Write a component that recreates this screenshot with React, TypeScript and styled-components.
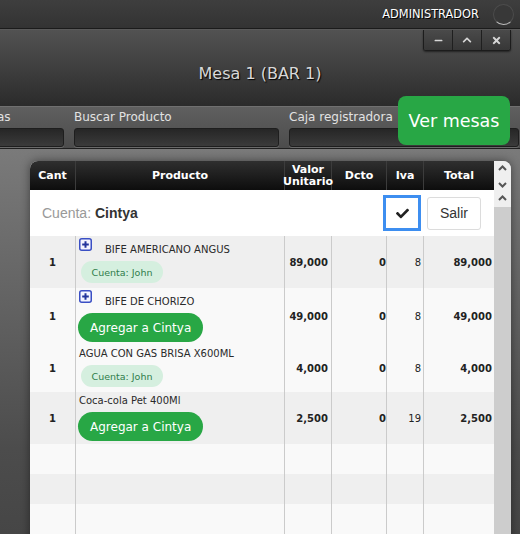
import React from 'react';
import styled, { createGlobalStyle } from 'styled-components';
import { FaCheck, FaMinus, FaChevronUp, FaTimes } from 'react-icons/fa';

const GlobalStyle = createGlobalStyle`
  html, body {
    margin: 0;
    padding: 0;
    background: #454545;
    overflow: hidden;
  }
  body {
    font-family: "DejaVu Sans", Verdana, sans-serif;
  }
`;

const COLS = '46px 209px 47px 55px 37px 70px';

const Page = styled.div`
  position: relative;
  width: 520px;
  height: 534px;
  overflow: hidden;
  display: flex;
  flex-direction: column;
`;

const TopBar = styled.header`
  height: 28px;
  flex: none;
  background: linear-gradient(#3e3e3e, #333);
  border-bottom: 1px solid #1b1b1b;
  display: flex;
  align-items: center;
  justify-content: flex-end;
  gap: 14px;
  padding-right: 6px;
`;

const UserName = styled.span`
  color: #fff;
  font-size: 11.4px;
  text-shadow: 1px 1px 0 #000;
`;

const Avatar = styled.span`
  width: 19px;
  height: 19px;
  border-radius: 50%;
  background: #383838;
  border: 1px solid #4c4c4c;
  border-bottom-color: #bdbdbd;
`;

const TitleBar = styled.div`
  height: 76px;
  flex: none;
  border-top: 1px solid #5a5a5a;
  background: linear-gradient(#525252, #2b2b2b);
  display: flex;
  flex-direction: column;
`;

const WindowButtons = styled.div`
  align-self: flex-end;
  margin-right: 9px;
  display: flex;
  border: 1px solid #1c1c1c;
  border-top: none;
  border-radius: 0 0 3px 3px;
  overflow: hidden;
  box-shadow: 0 1px 2px rgba(0, 0, 0, 0.5);
`;

const WinBtn = styled.span`
  width: 28px;
  height: 20px;
  display: flex;
  align-items: center;
  justify-content: center;
  color: #d6d6d6;
  background: linear-gradient(#4a4a4a, #373737);
  & + & {
    border-left: 1px solid #1f1f1f;
  }
`;

const Title = styled.h1`
  margin: 13px 0 0;
  text-align: center;
  font-size: 16px;
  font-weight: normal;
  line-height: 20px;
  color: #d8d8d8;
  text-shadow: 1px 1px 1px #000;
`;

const Toolbar = styled.div`
  height: 41px;
  flex: none;
  border-top: 1px solid #707070;
  border-bottom: 1px solid #202020;
  background: linear-gradient(#5f5f5f, #4c4c4c);
  overflow: hidden;
`;

const Fields = styled.div`
  display: flex;
  gap: 10px;
  margin-left: -27px;
  padding-top: 3px;
`;

const Field = styled.label<{ $w: number }>`
  width: ${(p) => p.$w}px;
  flex: none;
  display: flex;
  flex-direction: column;
  gap: 3px;
`;

const FieldLabel = styled.span`
  font-size: 12px;
  line-height: 15px;
  color: #e2e2e2;
  white-space: nowrap;
`;

const FieldInput = styled.span`
  height: 17px;
  border: 1px solid #1e1e1e;
  border-radius: 3px;
  background: linear-gradient(#262626, #3b3b3b);
  box-shadow: 0 1px 0 #6a6a6a;
`;

const VerMesas = styled.button`
  position: absolute;
  top: 96px;
  right: 10px;
  width: 112px;
  height: 49px;
  border: none;
  border-radius: 8px;
  background: #28a745;
  color: #fff;
  font-family: "DejaVu Sans", Verdana, sans-serif;
  font-size: 17.5px;
  padding: 0;
`;

const Content = styled.main`
  flex: 1;
  padding: 12px 0 0 30px;
  background: linear-gradient(#7a7a7a 0, #4c4c4c 300px, #444 100%);
`;

const Card = styled.section`
  width: 481px;
  height: 400px;
  display: flex;
  border-radius: 8px 8px 0 0;
  overflow: hidden;
  box-shadow: 0 0 10px rgba(0, 0, 0, 0.45);
`;

const TableArea = styled.div`
  width: 464px;
  flex: none;
  background: #f9f9f9;
`;

const HeadRow = styled.div`
  display: grid;
  grid-template-columns: ${COLS};
  height: 29px;
  background: linear-gradient(#2f2f2f, #0d0d0d);
`;

const HeadCell = styled.div`
  display: flex;
  align-items: center;
  justify-content: center;
  text-align: center;
  color: #fff;
  font-size: 11px;
  font-weight: bold;
  line-height: 12px;
  white-space: nowrap;
  &:not(:last-child) {
    border-right: 1px solid #3c3c3c;
  }
`;

const CuentaBar = styled.div`
  height: 46px;
  background: #fff;
  display: flex;
  align-items: center;
  gap: 6px;
  padding: 0 13px 0 12px;
  font-family: "Liberation Sans", Arial, sans-serif;
  font-size: 14px;
`;

const CuentaLabel = styled.span`
  flex: 1;
  color: #999;
  b {
    color: #333;
  }
`;

const CheckBtn = styled.button`
  width: 38px;
  height: 36px;
  display: flex;
  align-items: center;
  justify-content: center;
  background: #fff;
  border: 3px solid #3d8ef0;
  color: #222;
  padding: 0;
`;

const SalirBtn = styled.button`
  width: 54px;
  height: 33px;
  background: #fff;
  border: 1px solid #dcdcdc;
  border-radius: 3px;
  color: #333;
  font-family: "Liberation Sans", Arial, sans-serif;
  font-size: 14px;
  padding: 0;
`;

const Row = styled.div<{ $shade: boolean; $h?: number }>`
  display: grid;
  grid-template-columns: ${COLS};
  background: ${(p) => (p.$shade ? '#efefef' : '#f9f9f9')};
  min-height: ${(p) => p.$h ?? 0}px;
`;

const Cell = styled.div<{ $align?: string; $pr?: number; $bold?: boolean }>`
  display: flex;
  align-items: center;
  justify-content: ${(p) => p.$align ?? 'flex-end'};
  padding-right: ${(p) => p.$pr ?? 0}px;
  font-size: 10px;
  font-weight: ${(p) => (p.$bold ? 'bold' : 'normal')};
  color: #222;
  &:not(:last-child) {
    border-right: 1px solid #cbcbcb;
  }
`;

const ProductCell = styled.div`
  padding: 2px 3px 3px 2px;
  border-right: 1px solid #cbcbcb;
  display: flex;
  flex-direction: column;
  align-items: flex-start;
  gap: 5px;
`;

const NameLine = styled.div`
  display: flex;
  align-items: flex-start;
  margin-left: 1px;
`;

const Name = styled.span<{ $icon?: boolean }>`
  font-size: 10px;
  line-height: 12px;
  color: #2a2a2a;
  white-space: nowrap;
  margin: ${(p) => (p.$icon ? '6px 0 0 13px' : '1px 0 0 0')};
`;

const Badge = styled.span`
  height: 22px;
  display: inline-flex;
  align-items: center;
  padding: 0 10.5px;
  margin: 0 0 2px 3px;
  border-radius: 11px;
  background: #d5efdf;
  color: #2f7d4a;
  font-size: 9.5px;
`;

const AddBtn = styled.button`
  height: 29px;
  padding: 0 12px;
  border: none;
  border-radius: 15px;
  background: #28a745;
  color: #fff;
  font-family: "DejaVu Sans", Verdana, sans-serif;
  font-size: 12px;
`;

const Scrollbar = styled.div`
  width: 17px;
  flex: none;
  background: #cdcdcd;
`;

const ScrollTop = styled.div`
  height: 46px;
  background: #efefef;
  display: flex;
  flex-direction: column;
  align-items: center;
`;

const Chevron = styled.svg<{ $mt: number }>`
  display: block;
  margin-top: ${(p) => p.$mt}px;
`;

const PlusIcon = () => (
  <svg width="13" height="13" viewBox="0 0 13 13">
    <rect x="0.75" y="0.75" width="11.5" height="11.5" rx="2" fill="#f3f5ff" stroke="#3a4fc4" strokeWidth="1.5" />
    <path d="M6.5 3.2v6.6M3.2 6.5h6.6" stroke="#22359c" strokeWidth="2" />
  </svg>
);

type Item = {
  name: string;
  icon: boolean;
  owner?: string;
  price: string;
  iva: string;
  shade: boolean;
};

const items: Item[] = [
  { name: 'BIFE AMERICANO ANGUS', icon: true, owner: 'John', price: '89,000', iva: '8', shade: true },
  { name: 'BIFE DE CHORIZO', icon: true, price: '49,000', iva: '8', shade: false },
  { name: 'AGUA CON GAS BRISA X600ML', icon: false, owner: 'John', price: '4,000', iva: '8', shade: false },
  { name: 'Coca-cola Pet 400Ml', icon: false, price: '2,500', iva: '19', shade: true },
];

const emptyShades = [false, true, false, true];

export default function App() {
  return (
    <Page>
      <GlobalStyle />
      <TopBar>
        <UserName>ADMINISTRADOR</UserName>
        <Avatar />
      </TopBar>
      <TitleBar>
        <WindowButtons>
          <WinBtn><FaMinus size={9} /></WinBtn>
          <WinBtn><FaChevronUp size={10} /></WinBtn>
          <WinBtn><FaTimes size={11} /></WinBtn>
        </WindowButtons>
        <Title>Mesa 1 (BAR 1)</Title>
      </TitleBar>
      <Toolbar>
        <Fields>
          <Field $w={91}>
            <FieldLabel>Mesas</FieldLabel>
            <FieldInput />
          </Field>
          <Field $w={205}>
            <FieldLabel>Buscar Producto</FieldLabel>
            <FieldInput />
          </Field>
          <Field $w={230}>
            <FieldLabel>Caja registradora</FieldLabel>
            <FieldInput />
          </Field>
        </Fields>
      </Toolbar>
      <VerMesas>Ver mesas</VerMesas>
      <Content>
        <Card>
          <TableArea>
            <HeadRow>
              <HeadCell>Cant</HeadCell>
              <HeadCell>Producto</HeadCell>
              <HeadCell>Valor<br />Unitario</HeadCell>
              <HeadCell>Dcto</HeadCell>
              <HeadCell>Iva</HeadCell>
              <HeadCell>Total</HeadCell>
            </HeadRow>
            <CuentaBar>
              <CuentaLabel>Cuenta: <b>Cintya</b></CuentaLabel>
              <CheckBtn><FaCheck size={13} /></CheckBtn>
              <SalirBtn>Salir</SalirBtn>
            </CuentaBar>
            {items.map((it) => (
              <Row key={it.name} $shade={it.shade}>
                <Cell $align="center" $bold>1</Cell>
                <ProductCell>
                  <NameLine>
                    {it.icon && <PlusIcon />}
                    <Name $icon={it.icon}>{it.name}</Name>
                  </NameLine>
                  {it.owner ? (
                    <Badge>Cuenta: {it.owner}</Badge>
                  ) : (
                    <AddBtn>Agregar a Cintya</AddBtn>
                  )}
                </ProductCell>
                <Cell $pr={3} $bold>{it.price}</Cell>
                <Cell $pr={0} $bold>0</Cell>
                <Cell $pr={2}>{it.iva}</Cell>
                <Cell $pr={2} $bold>{it.price}</Cell>
              </Row>
            ))}
            {emptyShades.map((s, i) => (
              <Row key={i} $shade={s} $h={30}>
                <Cell />
                <Cell />
                <Cell />
                <Cell />
                <Cell />
                <Cell />
              </Row>
            ))}
          </TableArea>
          <Scrollbar>
            <ScrollTop>
              <Chevron $mt={3} width="9" height="8" viewBox="0 0 9 8">
                <polyline points="1,6 4.5,2.5 8,6" fill="none" stroke="#555" strokeWidth="2" />
              </Chevron>
              <Chevron $mt={9} width="9" height="8" viewBox="0 0 9 8">
                <polyline points="1,2 4.5,5.5 8,2" fill="none" stroke="#555" strokeWidth="2" />
              </Chevron>
              <Chevron $mt={5} width="9" height="8" viewBox="0 0 9 8">
                <polyline points="1,6 4.5,2.5 8,6" fill="none" stroke="#555" strokeWidth="2" />
              </Chevron>
            </ScrollTop>
          </Scrollbar>
        </Card>
      </Content>
    </Page>
  );
}
